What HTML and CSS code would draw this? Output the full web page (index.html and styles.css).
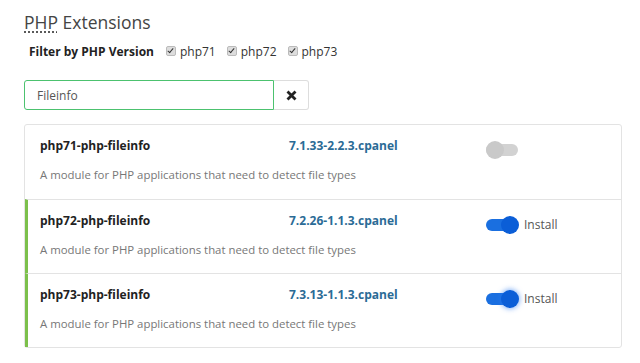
FILE: index.html
```html
<!DOCTYPE html>
<html lang="en">
  <head>
    <meta charset="UTF-8" />
    <meta name="viewport" content="width=device-width, initial-scale=1.0" />
    <title>PHP Extensions</title>
    <link rel="stylesheet" href="styles.css">
  </head>
  <body>
    <div class="page">
      <h1 class="title"><abbr title="PHP: Hypertext Preprocessor">PHP</abbr> Extensions</h1>

      <div class="filter">
        <span class="filter-label">Filter by PHP Version</span>
        <label class="check"><span class="box"></span>php71</label>
        <label class="check"><span class="box"></span>php72</label>
        <label class="check"><span class="box"></span>php73</label>
      </div>

      <div class="search">
        <input class="search-input" type="text" value="Fileinfo" />
        <button class="search-clear" type="button">
          <svg width="11" height="11" viewBox="0 0 11 11">
            <path d="M1.5 1.5 L9.5 9.5 M9.5 1.5 L1.5 9.5" stroke="#222" stroke-width="2.8" stroke-linecap="butt" />
          </svg>
        </button>
      </div>

      <div class="list">
        <div class="item">
          <div class="name">php71-php-fileinfo</div>
          <div class="version">7.1.33-2.2.3.cpanel</div>
          <div class="action">
            <span class="toggle"><span class="knob"></span></span>
          </div>
          <div class="desc">A module for PHP applications that need to detect file types</div>
        </div>
        <div class="item installed">
          <div class="name">php72-php-fileinfo</div>
          <div class="version">7.2.26-1.1.3.cpanel</div>
          <div class="action">
            <span class="toggle on"><span class="knob"></span></span>
            <span class="action-label">Install</span>
          </div>
          <div class="desc">A module for PHP applications that need to detect file types</div>
        </div>
        <div class="item installed">
          <div class="name">php73-php-fileinfo</div>
          <div class="version">7.3.13-1.1.3.cpanel</div>
          <div class="action">
            <span class="toggle on focus"><span class="knob"></span></span>
            <span class="action-label">Install</span>
          </div>
          <div class="desc">A module for PHP applications that need to detect file types</div>
        </div>
      </div>
    </div>
  </body>
</html>
```

FILE: styles.css
```css
body {
  margin: 0;
  background-color: #fff;
  font-family: "Open Sans", sans-serif;
  color: #333;
}

.page {
  padding: 10px 18px 0 24px;
}

.title {
  margin: 0;
  font-size: 17.5px;
  font-weight: 400;
  line-height: 24px;
  color: #444;
}

.title abbr {
  text-decoration: underline dotted;
  text-underline-offset: 3px;
}

.filter {
  display: flex;
  align-items: center;
  gap: 11px;
  margin: 6px 0 0 5px;
  height: 22px;
  font-size: 12px;
}

.filter-label {
  font-weight: 700;
  margin-right: 1px;
  color: #222;
}

.check {
  display: flex;
  align-items: center;
  gap: 4px;
  color: #333;
}

.box {
  position: relative;
  width: 8px;
  height: 8px;
  background-color: #ddd;
  border: 1px solid #bbb;
  border-radius: 2px;
}

.box::after {
  content: "";
  position: absolute;
  left: 2px;
  top: 0;
  width: 2px;
  height: 5px;
  border: solid #333;
  border-width: 0 1.5px 1.5px 0;
  transform: rotate(40deg);
}

.search {
  display: flex;
  margin-top: 18px;
  width: 285px;
  height: 30px;
}

.search-input {
  box-sizing: border-box;
  width: 250px;
  height: 30px;
  padding: 0 12px;
  border: 1px solid #4cc26f;
  border-radius: 3px 0 0 3px;
  font-family: "Open Sans", sans-serif;
  font-size: 12px;
  color: #555;
  outline: none;
}

.search-clear {
  box-sizing: border-box;
  width: 35px;
  height: 30px;
  border: 1px solid #ddd;
  border-left: none;
  border-radius: 0 3px 3px 0;
  background-color: #fff;
  display: flex;
  align-items: center;
  justify-content: center;
  padding: 0;
}

.list {
  margin-top: 14px;
  border: 1px solid #e3e3e3;
  border-radius: 3px;
}

.item {
  display: grid;
  grid-template-columns: 249px 196px 1fr;
  grid-template-rows: 22px 26px;
  padding: 9px 16px 0 12px;
  height: 74px;
  box-sizing: border-box;
  border-left: 3px solid transparent;
  border-top: 1px solid #e3e3e3;
}

.item:first-child {
  border-top: none;
}

.item.installed {
  border-left-color: #7cc04b;
}

.name {
  font-size: 12px;
  font-weight: 700;
  color: #222;
  align-self: center;
}

.version {
  font-size: 12px;
  font-weight: 700;
  color: #2b6b96;
  align-self: center;
}

.action {
  display: flex;
  align-items: center;
  gap: 6px;
  padding-top: 9px;
}

.action-label {
  font-size: 12px;
  color: #555;
}

.desc {
  grid-column: 1 / 4;
  align-self: end;
  font-size: 11.4px;
  color: #777;
}

.toggle {
  position: relative;
  display: inline-block;
  width: 32px;
  height: 12px;
  margin-left: 1px;
  border-radius: 6px;
  background-color: #d2d2d2;
}

.toggle .knob {
  position: absolute;
  left: 0;
  top: -3px;
  width: 18px;
  height: 18px;
  border-radius: 50%;
  background-color: #c9c9c9;
}

.toggle.on {
  background-color: #1a6fe0;
}

.toggle.on .knob {
  left: auto;
  right: -1px;
  background-color: #0b5ed7;
}

.toggle.focus .knob {
  box-shadow: 0 0 5px 1px rgba(40, 120, 240, 0.55);
}
```
